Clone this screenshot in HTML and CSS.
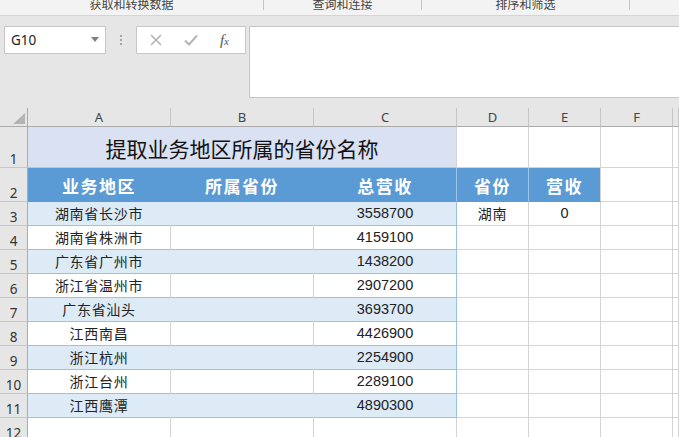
FILE: index.html
```html
<!DOCTYPE html>
<html lang="zh-CN">
<head>
    <meta charset="UTF-8">
    <meta name="viewport" content="width=device-width, initial-scale=1.0">
    <title>提取业务地区所属的省份名称</title>
    <link rel="stylesheet" href="styles.css">
</head>
<body>
    <!-- 功能区底部的分组标题 -->
    <div class="ribbon">
        <div class="group g1"><span>获取和转换数据</span></div>
        <div class="group g2"><span>查询和连接</span></div>
        <div class="group g3"><span>排序和筛选</span></div>
        <div class="group g4"></div>
    </div>

    <!-- 名称框 + 编辑栏 -->
    <div class="formula-bar">
        <div class="name-box">
            <span>G10</span>
            <svg class="drop" width="8" height="5" viewBox="0 0 8 5"><path d="M0 0H8L4 5Z" fill="#808080"/></svg>
        </div>
        <div class="grip"><i></i><i></i><i></i></div>
        <div class="fx-buttons">
            <svg width="12" height="12" viewBox="0 0 12 12"><path d="M1 1L11 11M11 1L1 11" stroke="#b4b4b4" stroke-width="1.6"/></svg>
            <svg width="14" height="12" viewBox="0 0 14 12"><path d="M1 6.5L5 10.5L13 1.5" stroke="#b4b4b4" stroke-width="2" fill="none"/></svg>
            <span class="fx">f<small>x</small></span>
        </div>
        <div class="formula-input"></div>
    </div>

    <table class="sheet">
        <colgroup>
            <col class="c-rh"><col class="c-wide"><col class="c-wide"><col class="c-wide">
            <col class="c-narrow"><col class="c-narrow"><col class="c-narrow"><col>
        </colgroup>
        <tr class="r-head">
            <td class="corner"><svg width="12" height="11" viewBox="0 0 12 11"><path d="M12 0V11H0Z" fill="#b4b4b4"/></svg></td>
            <td class="ch">A</td><td class="ch">B</td><td class="ch">C</td>
            <td class="ch">D</td><td class="ch">E</td><td class="ch">F</td><td class="ch"></td>
        </tr>
        <tr class="r-title">
            <td class="rh">1</td>
            <td class="title" colspan="3">提取业务地区所属的省份名称</td>
            <td></td><td></td><td></td><td></td>
        </tr>
        <tr class="r-hd">
            <td class="rh">2</td>
            <td class="hd">业务地区</td><td class="hd">所属省份</td><td class="hd hd-end">总营收</td>
            <td class="hd hd-end">省份</td><td class="hd hd-last">营收</td><td></td><td></td>
        </tr>
        <tr class="band">
            <td class="rh">3</td>
            <td class="txt">湖南省长沙市</td><td></td><td class="num">3558700</td>
            <td class="txt">湖南</td><td class="num">0</td><td></td><td></td>
        </tr>
        <tr class="plain">
            <td class="rh">4</td>
            <td class="txt">湖南省株洲市</td><td></td><td class="num">4159100</td>
            <td></td><td></td><td></td><td></td>
        </tr>
        <tr class="band">
            <td class="rh">5</td>
            <td class="txt">广东省广州市</td><td></td><td class="num">1438200</td>
            <td></td><td></td><td></td><td></td>
        </tr>
        <tr class="plain">
            <td class="rh">6</td>
            <td class="txt">浙江省温州市</td><td></td><td class="num">2907200</td>
            <td></td><td></td><td></td><td></td>
        </tr>
        <tr class="band">
            <td class="rh">7</td>
            <td class="txt">广东省汕头</td><td></td><td class="num">3693700</td>
            <td></td><td></td><td></td><td></td>
        </tr>
        <tr class="plain">
            <td class="rh">8</td>
            <td class="txt">江西南昌</td><td></td><td class="num">4426900</td>
            <td></td><td></td><td></td><td></td>
        </tr>
        <tr class="band">
            <td class="rh">9</td>
            <td class="txt">浙江杭州</td><td></td><td class="num">2254900</td>
            <td></td><td></td><td></td><td></td>
        </tr>
        <tr class="plain">
            <td class="rh">10</td>
            <td class="txt">浙江台州</td><td></td><td class="num">2289100</td>
            <td></td><td></td><td></td><td></td>
        </tr>
        <tr class="band">
            <td class="rh">11</td>
            <td class="txt">江西鹰潭</td><td></td><td class="num">4890300</td>
            <td></td><td></td><td></td><td></td>
        </tr>
        <tr class="empty">
            <td class="rh">12</td>
            <td></td><td></td><td></td><td></td><td></td><td></td><td></td>
        </tr>
    </table>
</body>
</html>
```

FILE: styles.css
```css
body{
    margin: 0;
    width: 679px;
    height: 437px;
    overflow: hidden;
    background: #fff;
    font-family: "Liberation Sans", "Noto Sans CJK SC", sans-serif;
    color: #222;
}

/* 功能区分组标题 */
.ribbon{
    display: flex;
    height: 15px;
    background: #f3f3f3;
    border-bottom: 1px solid #d5d5d5;
    overflow: hidden;
}
.group{
    height: 10px;
    border-right: 1px solid #c6c6c6;
    text-align: center;
    font-size: 12px;
    line-height: 12px;
    color: #444;
}
.group span{
    display: block;
    margin-top: -1px;
}
.g1{ width: 263px; }
.g2{ width: 157px; }
.g3{ width: 207px; }
.g4{ flex: 1; border-right: none; }

/* 编辑栏 */
.formula-bar{
    display: flex;
    align-items: flex-start;
    height: 82px;
    padding-top: 10px;
    background: #e6e6e6;
}
.name-box{
    box-sizing: border-box;
    width: 102px;
    height: 28px;
    margin-left: 4px;
    background: #fff;
    border: 1px solid #c6c6c6;
    display: flex;
    align-items: center;
    justify-content: space-between;
    padding: 0 6px 0 6px;
    font-family: "Noto Sans", sans-serif;
    font-size: 13.5px;
    color: #222;
}
.drop{
    margin-top: -2px;
}
.grip{
    width: 30px;
    height: 28px;
    display: flex;
    flex-direction: column;
    align-items: center;
    justify-content: center;
    gap: 2px;
}
.grip i{
    display: block;
    width: 2px;
    height: 2px;
    background: #a6a6a6;
}
.fx-buttons{
    box-sizing: border-box;
    width: 110px;
    height: 28px;
    background: #fff;
    border: 1px solid #c6c6c6;
    display: flex;
    align-items: center;
    justify-content: space-between;
    padding: 0 16px 0 13px;
}
.fx{
    font-family: "Liberation Serif", serif;
    font-style: italic;
    font-size: 15px;
    color: #555;
}
.fx small{
    font-size: 11px;
}
.formula-input{
    flex: 1;
    box-sizing: border-box;
    height: 72px;
    margin-left: 3px;
    background: #fff;
    border: 1px solid #c6c6c6;
    border-right: none;
}

/* 工作表 */
.sheet{
    width: 679px;
    table-layout: fixed;
    border-collapse: separate;
    border-spacing: 0;
}
.c-rh{ width: 28px; }
.c-wide{ width: 143px; }
.c-narrow{ width: 72px; }
.sheet td{
    padding: 0;
    border-right: 1px solid #d4d4d4;
    border-bottom: 1px solid #d4d4d4;
    vertical-align: bottom;
    text-align: center;
    white-space: nowrap;
    overflow: hidden;
}
.r-head{ height: 19px; }
.r-title{ height: 41px; }
.r-hd{ height: 34px; }
.band, .plain, .empty{ height: 24px; }

.corner{
    background: #e6e6e6;
    border-bottom-color: #ababab !important;
    border-right-color: #ababab !important;
}
.corner svg{
    display: block;
    margin: 0 2px 2px auto;
}
.ch{
    background: #e6e6e6;
    border-bottom-color: #ababab !important;
    border-right-color: #c6c6c6 !important;
    font-family: "Noto Sans", sans-serif;
    font-size: 13px;
    line-height: 16px;
    color: #444;
    vertical-align: middle !important;
}
.rh{
    background: #e6e6e6;
    border-right-color: #ababab !important;
    border-bottom-color: #c6c6c6 !important;
    font-family: "Noto Sans", sans-serif;
    font-size: 13.5px;
    line-height: 16px;
    color: #333;
}

.title{
    background: #d9e1f2;
    border-bottom-color: #b4c6e7 !important;
    font-family: "Noto Sans CJK SC", sans-serif;
    font-size: 21px;
    line-height: 26px;
    padding-bottom: 6px !important;
    color: #111;
}

.hd{
    background: #5b9bd5;
    border-right-color: #5b9bd5 !important;
    border-bottom-color: #5b9bd5 !important;
    color: #fff;
    font-family: "Noto Sans CJK SC", sans-serif;
    font-weight: bold;
    font-size: 17px;
    letter-spacing: 1.5px;
    line-height: 22px;
    padding-bottom: 4px !important;
}
.hd-end{
    border-right-color: #9dc3e6 !important;
}
.hd-last{
    border-right-color: #d4d4d4 !important;
}

.band td:nth-child(-n+4){
    background: #ddebf7;
    border-right-color: #ddebf7;
    border-bottom-color: #9bc2e6;
}
.plain td:nth-child(-n+4){
    border-bottom-color: #9bc2e6;
}
.band td:nth-child(4), .plain td:nth-child(4){
    border-right-color: #9bc2e6;
}
.band td.rh, .plain td.rh{
    background: #e6e6e6;
    border-right-color: #ababab;
    border-bottom-color: #c6c6c6;
}

.txt{
    font-family: "Noto Sans CJK SC", sans-serif;
    font-size: 14px;
    letter-spacing: 0.7px;
    line-height: 19px;
    padding-bottom: 2px !important;
    color: #222;
}
.num{
    font-size: 14.5px;
    line-height: 19px;
    padding-bottom: 2px !important;
    color: #222;
}
```
